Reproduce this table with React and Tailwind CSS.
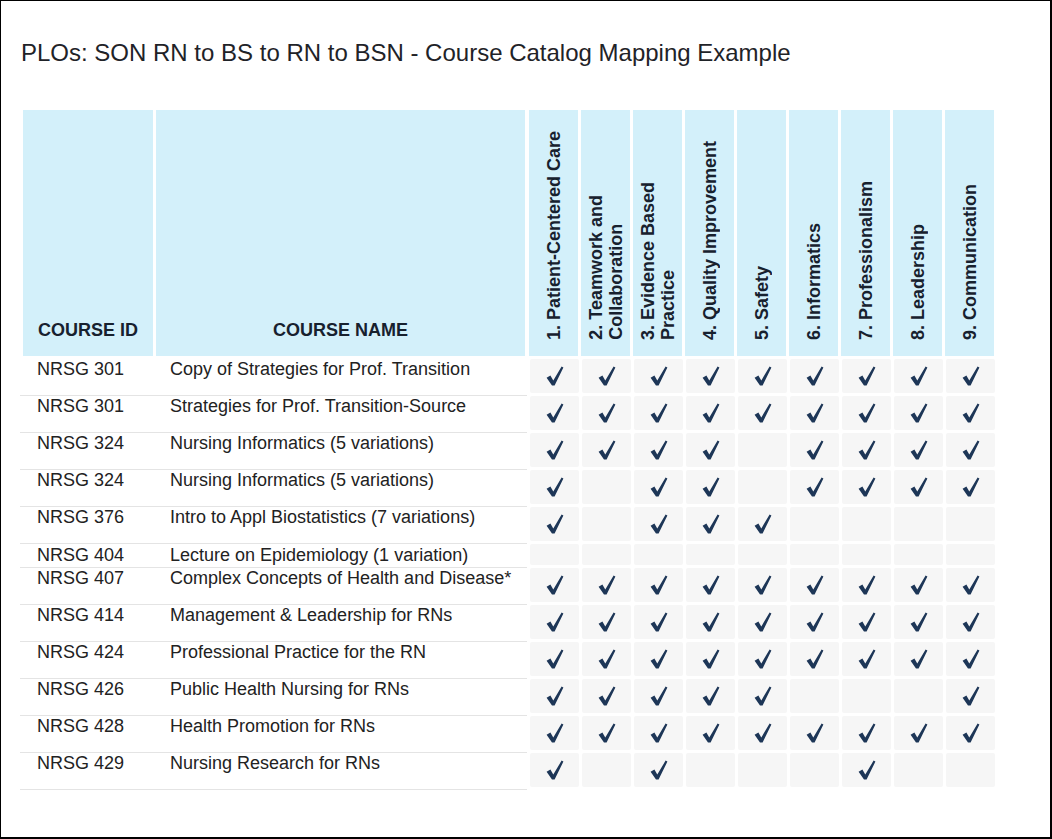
const plos = [
  ['1. Patient-Centered Care'],
  ['2. Teamwork and', 'Collaboration'],
  ['3. Evidence Based', 'Practice'],
  ['4. Quality Improvement'],
  ['5. Safety'],
  ['6. Informatics'],
  ['7. Professionalism'],
  ['8. Leadership'],
  ['9. Communication'],
];

const all = [1, 1, 1, 1, 1, 1, 1, 1, 1];

const courses = [
  { id: 'NRSG 301', name: 'Copy of Strategies for Prof. Transition', marks: all },
  { id: 'NRSG 301', name: 'Strategies for Prof. Transition-Source', marks: all },
  { id: 'NRSG 324', name: 'Nursing Informatics (5 variations)', marks: [1, 1, 1, 1, 0, 1, 1, 1, 1] },
  { id: 'NRSG 324', name: 'Nursing Informatics (5 variations)', marks: [1, 0, 1, 1, 0, 1, 1, 1, 1] },
  { id: 'NRSG 376', name: 'Intro to Appl Biostatistics (7 variations)', marks: [1, 0, 1, 1, 1, 0, 0, 0, 0] },
  { id: 'NRSG 404', name: 'Lecture on Epidemiology (1 variation)', marks: [0, 0, 0, 0, 0, 0, 0, 0, 0], short: true },
  { id: 'NRSG 407', name: 'Complex Concepts of Health and Disease*', marks: all },
  { id: 'NRSG 414', name: 'Management & Leadership for RNs', marks: all },
  { id: 'NRSG 424', name: 'Professional Practice for the RN', marks: all },
  { id: 'NRSG 426', name: 'Public Health Nursing for RNs', marks: [1, 1, 1, 1, 1, 0, 0, 0, 1] },
  { id: 'NRSG 428', name: 'Health Promotion for RNs', marks: all },
  { id: 'NRSG 429', name: 'Nursing Research for RNs', marks: [1, 0, 1, 0, 0, 0, 1, 0, 0] },
];

function Check() {
  return (
    <svg width="18" height="20" viewBox="0 0 18 20" className="block">
      <path d="M0.6 11.8 L4.4 9.4 L7.3 14.4 L15.6 0.6 L17.4 1.6 L8.6 19.4 L6.0 19.4 Z" fill="#1d3657" />
    </svg>
  );
}

export default function App() {
  return (
    <div className="w-[1052px] h-[839px] bg-white border-t border-l border-r-2 border-b-2 border-black font-['Liberation_Sans',Arial,sans-serif] text-[#222]">
      <h1 className="pl-[20px] pt-[38px] text-[24px] leading-[28px] font-normal text-[#1f2328]">
        PLOs: SON RN to BS to RN to BSN - Course Catalog Mapping Example
      </h1>

      <div className="pl-[19px] mt-[43px]">
        {/* header */}
        <div className="flex h-[246px] mb-[3px] ml-[3px]">
          <div className="w-[130px] bg-[#d3f0fa] flex items-end justify-center pb-4">
            <span className="text-[18px] leading-5 font-bold text-[#17212e]">COURSE ID</span>
          </div>
          <div className="w-[369px] ml-[3px] bg-[#d3f0fa] flex items-end justify-center pb-4">
            <span className="text-[18px] leading-5 font-bold text-[#17212e]">COURSE NAME</span>
          </div>
          <div className="flex gap-[3px] ml-[4px]">
            {plos.map((lines, i) => (
              <div key={i} className="w-[49px] bg-[#d3f0fa] flex items-end justify-center pb-4">
                <div className="[writing-mode:vertical-rl] rotate-180 text-[18px] leading-5 font-bold text-[#17212e] whitespace-nowrap">
                  {lines.map((l, j) => (
                    <span key={j}>
                      {l}
                      {j < lines.length - 1 && <br />}
                    </span>
                  ))}
                </div>
              </div>
            ))}
          </div>
        </div>

        {/* body */}
        {courses.map((c, r) => (
          <div key={r} className={c.short ? 'flex h-[24px]' : 'flex h-[37px]'}>
            <div className="w-[507px] flex border-b border-[#e4e4e4] text-[18px] leading-5">
              <div className={c.short ? 'w-[137px] pl-[17px] pt-[1px]' : 'w-[137px] pl-[17px]'}>{c.id}</div>
              <div className={c.short ? 'pl-[13px] pt-[1px]' : 'pl-[13px]'}>{c.name}</div>
            </div>
            <div className="flex gap-[3px] ml-[3px]">
              {c.marks.map((m, i) => (
                <div
                  key={i}
                  className={
                    c.short
                      ? 'w-[49px] h-[21px] bg-[#f6f6f6] rounded-[2px] flex items-center justify-center'
                      : 'w-[49px] h-[34px] bg-[#f6f6f6] rounded-[2px] flex items-center justify-center'
                  }
                >
                  {m ? <Check /> : null}
                </div>
              ))}
            </div>
          </div>
        ))}
      </div>
    </div>
  );
}
